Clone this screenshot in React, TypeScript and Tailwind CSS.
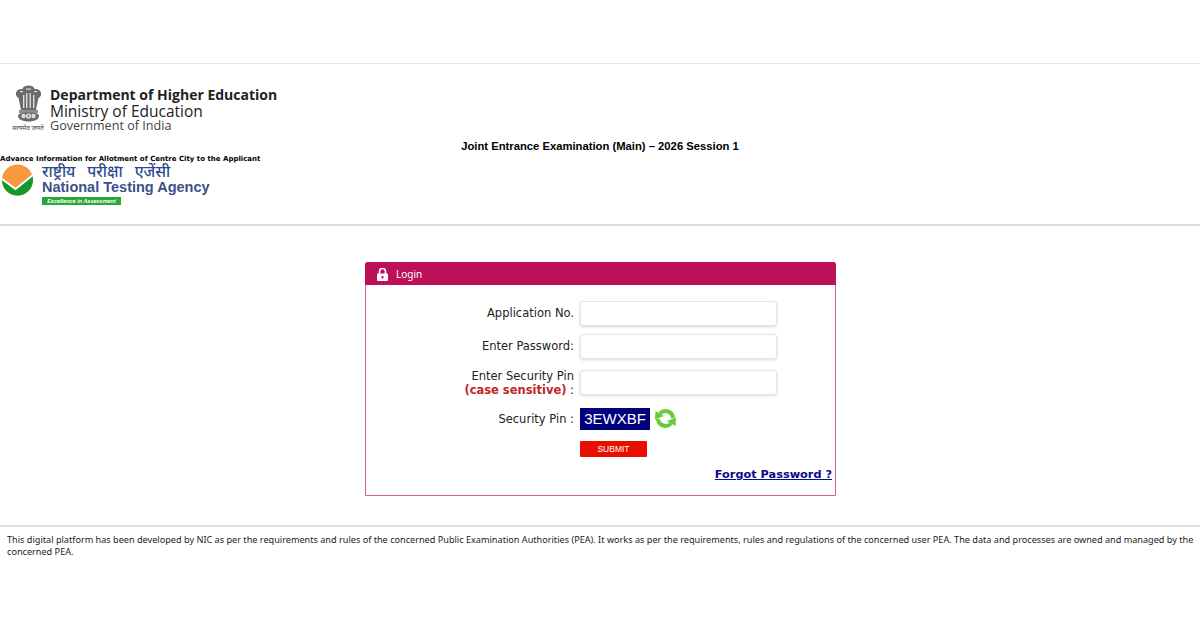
import React from 'react';

const Emblem = () => (
  <svg width="27" height="37" viewBox="0 0 27 37" className="block">
    <g fill="#6a6a6a">
      <path d="M13.5 0.5 C17 0.5 19 2 19.5 4 C22.5 3.5 25.5 5 26 8 C26.5 10.5 25 12.5 23.5 13 L22 20 L21 25 L6 25 L5 20 L3.5 13 C2 12.5 0.5 10.5 1 8 C1.5 5 4.5 3.5 7.5 4 C8 2 10 0.5 13.5 0.5 Z" />
      <rect x="4" y="25" width="19" height="3" fill="#8d8d8d" />
      <path d="M3 31 C3 28.5 7 27.5 13.5 27.5 C20 27.5 24 28.5 24 31 C24 34 20 36.5 13.5 36.5 C7 36.5 3 34 3 31 Z" />
    </g>
    <g fill="#dddddd">
      <rect x="8" y="10" width="1.4" height="13" />
      <rect x="11" y="8" width="1.4" height="15" />
      <rect x="14.5" y="8" width="1.4" height="15" />
      <rect x="18" y="10" width="1.4" height="13" />
      <rect x="5" y="6" width="3" height="1.2" />
      <rect x="19" y="6" width="3" height="1.2" />
      <rect x="11" y="3.5" width="5" height="1.2" />
      <circle cx="8.5" cy="31" r="2.2" />
      <circle cx="13.5" cy="31" r="2.6" />
      <circle cx="18.5" cy="31" r="2.2" />
    </g>
    <circle cx="13.5" cy="31" r="1" fill="#6a6a6a" />
  </svg>
);

const NtaMark = () => (
  <svg width="33" height="32" viewBox="0 0 33 32" className="block">
    <circle cx="16.5" cy="16" r="15.5" fill="#f7993c" />
    <path d="M1 15 L14.5 25 L31.3 11.5 A15.5 15.5 0 1 1 1 15 Z" fill="#149a2c" />
    <path d="M1 15 L14.5 25 L31.3 11.5" fill="none" stroke="#ffffff" strokeWidth="2" />
  </svg>
);

const LockMark = () => (
  <svg width="11" height="13" viewBox="0 0 11 13" className="block">
    <path d="M2.5 6 V3.5 A3 3 0 0 1 8.5 3.5 V6" fill="none" stroke="#ffffff" strokeWidth="1.6" />
    <path fillRule="evenodd" d="M1 5.5 H10 A1 1 0 0 1 11 6.5 V12 A1 1 0 0 1 10 13 H1 A1 1 0 0 1 0 12 V6.5 A1 1 0 0 1 1 5.5 Z M5.5 8 A1.2 1.2 0 0 0 5.5 10.4 A1.2 1.2 0 0 0 5.5 8 Z" fill="#ffffff" />
  </svg>
);

const RefreshMark = () => (
  <svg width="23" height="23" viewBox="0 0 23 23" className="block">
    <g fill="none" stroke="#66cc33" strokeWidth="4">
      <path d="M19 11 A7.5 7.5 0 0 0 6 6.5" />
      <path d="M4 12 A7.5 7.5 0 0 0 17 16.5" />
    </g>
    <g fill="#66cc33">
      <path d="M1 12.5 L1.5 4 L10 9 Z" />
      <path d="M22 10.5 L21.5 19 L13 14 Z" />
    </g>
  </svg>
);

const fieldClass =
  'w-[197px] h-[25px] bg-white border border-[#e4e4e4] rounded-[3px] shadow-[0_1px_3px_rgba(0,0,0,0.15)]';

const App = () => {
  return (
    <div className="w-[1200px] h-[630px] overflow-hidden bg-white text-black font-['DejaVu_Sans',sans-serif]">
      <div className="h-[64px] border-b border-[#e6e6e6]" />

      <header className="h-[162px] border-b-2 border-[#dddddd] pt-[21px]">
        <div className="flex items-start h-[50px] pl-[10px]">
          <div className="w-[36px] flex flex-col items-center">
            <Emblem />
            <div className="mt-[1px] text-[6.5px] leading-[10px] text-[#444] font-['Noto_Sans',sans-serif] whitespace-nowrap">
              सत्यमेव जयते
            </div>
          </div>
          <div className="pl-[4px] pt-[1px] font-['Open_Sans',sans-serif] text-[#222]">
            <div className="text-[14px] leading-[17px] font-bold">Department of Higher Education</div>
            <div className="text-[15.5px] leading-[16px]">Ministry of Education</div>
            <div className="text-[12.6px] leading-[14px] text-[#444]">Government of India</div>
          </div>
        </div>
        <div className="mt-[4px] text-center text-[11.25px] leading-[14px] font-bold font-['Liberation_Sans',sans-serif]">
          Joint Entrance Examination (Main) – 2026 Session 1
        </div>
        <div className="mt-[1px] text-[7px] leading-[10px] font-bold">
          Advance Information for Allotment of Centre City to the Applicant
        </div>
        <div className="flex items-start pl-[1px]">
          <NtaMark />
          <div className="pl-[8px] font-['Liberation_Sans',sans-serif]">
            <div className="text-[15.5px] leading-[14px] font-medium text-[#2e4a8c] font-['Noto_Sans',sans-serif] [word-spacing:8px]">
              राष्ट्रीय परीक्षा एजेंसी
            </div>
            <div className="mt-[1px] text-[14.5px] leading-[17px] font-bold text-[#3a5189]">National Testing Agency</div>
            <div className="mt-[1px] w-[79px] h-[8px] bg-[#2aa836] text-white text-[5.5px] leading-[8px] italic font-bold text-center whitespace-nowrap">
              Excellence in Assessment
            </div>
          </div>
        </div>
      </header>

      <main className="flex justify-center pt-[36px] pl-[1px]">
        <section className="w-[471px] h-[234px] border border-[#d9608c] rounded-t-[3px]">
          <div className="h-[22px] -mx-px -mt-px box-content pt-px bg-[#bc1058] rounded-t-[3px] flex items-center pl-[12px] gap-[8px] text-white text-[10px] font-['Noto_Sans',sans-serif]">
            <LockMark />
            <span>Login</span>
          </div>

          <form className="pt-[16px] text-[11.5px] text-[#222]">
            <div className="flex flex-col gap-[8px]">
              <div className="flex items-center gap-[6px]">
                <label className="w-[208px] text-right">Application No.</label>
                <div className={fieldClass} />
              </div>
              <div className="flex items-center gap-[6px]">
                <label className="w-[208px] text-right">Enter Password:</label>
                <div className={fieldClass} />
              </div>
              <div className="flex items-center gap-[6px]">
                <label className="w-[208px] text-right leading-[14px] pt-[2px]">
                  Enter Security Pin
                  <br />
                  <span className="font-bold text-[#c02626]">(case sensitive)</span> :
                </label>
                <div className={fieldClass} />
              </div>
            </div>

            <div className="flex items-center gap-[6px] mt-[10px]">
              <label className="w-[208px] text-right pt-[2px]">Security Pin :</label>
              <div className="w-[70px] h-[22px] bg-[#00007f] text-white text-[15px] leading-[22px] text-center font-['Liberation_Sans',sans-serif]">
                3EWXBF
              </div>
              <span className="-ml-[2px]">
                <RefreshMark />
              </span>
            </div>

            <div className="pl-[214px] mt-[11px]">
              <button
                type="button"
                className="block w-[67px] h-[16px] bg-[#e60f00] rounded-[1px] text-white text-[8.5px] leading-[16px] font-['Liberation_Sans',sans-serif]"
              >
                SUBMIT
              </button>
            </div>

            <div className="text-right pr-[3px] mt-[9px]">
              <a href="#" className="text-[11.3px] font-bold text-[#0a0a8a] underline">
                Forgot Password ?
              </a>
            </div>
          </form>
        </section>
      </main>

      <footer className="mt-[29px] border-t-2 border-[#dddddd] pt-[7px] pl-[7px] pr-[4px] text-[9.15px] leading-[11.5px] text-[#222] font-['Noto_Sans',sans-serif]">
        This digital platform has been developed by NIC as per the requirements and rules of the concerned Public
        Examination Authorities (PEA). It works as per the requirements, rules and regulations of the concerned user
        PEA. The data and processes are owned and managed by the concerned PEA.
      </footer>
    </div>
  );
};

export default App;
